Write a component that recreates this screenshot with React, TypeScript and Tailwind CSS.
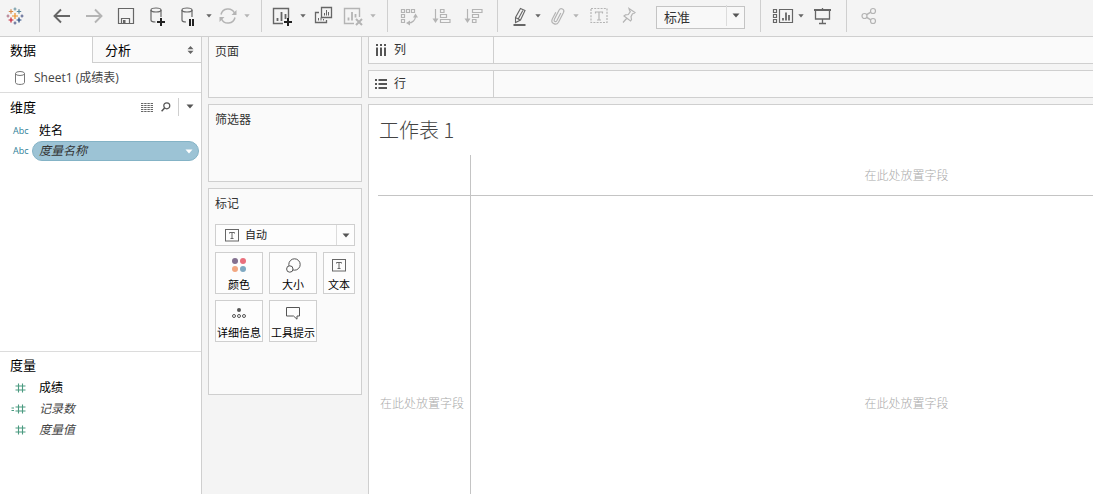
import type { ReactNode } from "react";

const sans = "font-['Open_Sans','Noto_Sans_CJK_SC',sans-serif]";
const light = "font-['Noto_Sans_CJK_SC_Light','Noto_Sans_CJK_SC',sans-serif] font-light";

function Icon({ children, dim = false }: { children: ReactNode; dim?: boolean }) {
  return (
    <svg
      viewBox="0 0 24 24"
      className={`size-6 shrink-0 ${dim ? "text-[#b4b4b4]" : "text-[#666]"}`}
      fill="none"
      stroke="currentColor"
      strokeWidth="1.2"
      aria-hidden="true"
    >
      {children}
    </svg>
  );
}

function Tool({ label, width, children }: { label: string; width: string; children: ReactNode }) {
  return (
    <button type="button" aria-label={label} className={`flex h-8 shrink-0 items-center justify-center ${width}`}>
      {children}
    </button>
  );
}

function Triangle({ color = "text-[#555]" }: { color?: string }) {
  return (
    <svg viewBox="0 0 8 5" className={`h-[5px] w-2 shrink-0 ${color}`} fill="currentColor" aria-hidden="true">
      <path d="M0.5 0.5h7L4 4.5z" />
    </svg>
  );
}

function Caret({ label, dim = false }: { label: string; dim?: boolean }) {
  return (
    <button type="button" aria-label={label} className="flex h-8 w-[10px] shrink-0 items-center justify-center">
      <svg viewBox="0 0 6 4" className={`h-1 w-[6px] ${dim ? "text-[#b4b4b4]" : "text-[#666]"}`} fill="currentColor">
        <path d="M0.3 0.3h5.4L3 3.6z" />
      </svg>
    </button>
  );
}

function Logo() {
  const marks: [number, number, number, string][] = [
    [12, 12, 3, "#eb912c"],
    [8, 7.5, 2.2, "#d98a4a"],
    [16, 7.5, 2.2, "#59879b"],
    [8, 16, 2.4, "#c72035"],
    [16, 16, 2.4, "#1f447e"],
    [12, 5, 1.5, "#7199a6"],
    [12, 19, 1.5, "#5b6591"],
    [5, 12, 1.5, "#b0778a"],
    [19, 12, 1.5, "#5b6591"],
  ];
  return (
    <Icon>
      {marks.map(([x, y, r, c]) => (
        <path key={`${x}-${y}`} d={`M${x - r} ${y}h${r * 2}M${x} ${y - r}v${r * 2}`} stroke={c} strokeWidth="1.2" />
      ))}
    </Icon>
  );
}

function Toolbar() {
  const group = "flex h-8 shrink-0 items-center border-r border-[#cfcfcf]";
  return (
    <header className="flex h-[37px] shrink-0 items-start overflow-hidden border-b border-[#cfcfcf] bg-[#f4f4f4]">
      <div className={`${group} w-10 pl-[3px]`}>
        <Tool label="Tableau" width="w-6"><Logo /></Tool>
      </div>
      <div className={`${group} w-[222px] pl-[6px]`}>
        <Tool label="后退" width="w-8">
          <Icon><path d="M20 12H5M11 5.5 4.5 12l6.5 6.5" strokeWidth="1.9" /></Icon>
        </Tool>
        <Tool label="前进" width="w-8">
          <Icon dim><path d="M4 12h15M13 5.5l6.5 6.5-6.5 6.5" strokeWidth="1.9" /></Icon>
        </Tool>
        <Tool label="保存" width="w-8">
          <Icon>
            <path d="M4.5 4.5h15v15h-15zM7.5 19v-4.5h8V19" />
            <path d="M9 16h2.5v3H9z" fill="currentColor" stroke="none" />
          </Icon>
        </Tool>
        <Tool label="新建数据源" width="w-8">
          <Icon>
            <ellipse cx="10" cy="6" rx="5" ry="2" />
            <path d="M5 6v10c0 1.2 2 2 4.5 2M15 6v7" />
            <path d="M11 18h8M15 14v8" stroke="#222" strokeWidth="2" />
          </Icon>
        </Tool>
        <Tool label="暂停自动更新" width="w-[30px]">
          <Icon>
            <ellipse cx="10" cy="6" rx="5" ry="2" />
            <path d="M5 6v10c0 1.2 1.6 2 4 2M15 6v7" />
            <path d="M13 15v7M16 15v7" stroke="#222" strokeWidth="2" />
          </Icon>
        </Tool>
        <Caret label="自动更新选项" />
        <Tool label="运行更新" width="w-[28px]">
          <Icon dim>
            <path d="M5 10.5A7.2 7.2 0 0 1 18.5 9M19 13.5A7.2 7.2 0 0 1 5.5 15" strokeWidth="1.5" />
            <path d="M20.5 6v5h-5zM3.5 18v-5h5z" fill="currentColor" stroke="none" />
          </Icon>
        </Tool>
        <Caret label="运行选项" dim />
      </div>
      <div className={`${group} w-[126px] pl-[6px]`}>
        <Tool label="新建工作表" width="w-[30px]">
          <Icon>
            <path d="M12 19.5H2.5v-15h15V14" strokeWidth="1.4" />
            <path d="M6.5 17v-3M10.5 17V8M14.5 15V10" strokeWidth="1.8" />
            <path d="M13 18h8M17 14v8" stroke="#222" strokeWidth="2" />
          </Icon>
        </Tool>
        <Caret label="新建选项" />
        <Tool label="复制工作表" width="w-[30px]">
          <Icon>
            <path d="M10.5 3.5h10v10h-10zM8 8.5H4.5v10h11V16" strokeWidth="1.3" />
            <path d="M13.5 11.5V9M15.5 11.5V6M17.5 11.5V8M7.5 16.5V14M10 16.5V13.5M12.5 16.5V15" strokeWidth="1" />
          </Icon>
        </Tool>
        <Tool label="清除工作表" width="w-[30px]">
          <Icon dim>
            <path d="M13 19.5H3.5v-15h15V13" strokeWidth="1.4" />
            <path d="M7.5 16.5v-3M11 16.5V8M14.5 13.5V10" strokeWidth="1.8" />
            <path d="M15 15l6 6M21 15l-6 6" strokeWidth="2" />
          </Icon>
        </Tool>
        <Caret label="清除选项" dim />
      </div>
      <div className={`${group} w-[110px] pl-[5px]`}>
        <Tool label="交换行和列" width="w-8">
          <Icon dim>
            <path d="M4.5 5.5h3v3h-3zM9.5 5.5h3v3h-3zM14.5 5.5h3v3h-3zM4.5 10.5h3v3h-3zM4.5 15.5h3v3h-3zM18.5 12c0 4-3 7-7 7" />
            <path d="M18.5 9.5l2.5 4h-5zM9 19l4-2.5v5z" fill="currentColor" stroke="none" />
          </Icon>
        </Tool>
        <Tool label="升序排序" width="w-8">
          <Icon dim>
            <path d="M6.5 5v11" />
            <path d="M3.5 14.5h6l-3 4.5z" fill="currentColor" stroke="none" />
            <path d="M11.5 5.5h3.5v3h-3.5zM11.5 10.5h6v3h-6zM11.5 15.5h9.5v3h-9.5z" />
          </Icon>
        </Tool>
        <Tool label="降序排序" width="w-8">
          <Icon dim>
            <path d="M6.5 5v11" />
            <path d="M3.5 14.5h6l-3 4.5z" fill="currentColor" stroke="none" />
            <path d="M11.5 5.5H21v3h-9.5zM11.5 10.5h6v3h-6zM11.5 15.5h3.5v3h-3.5z" />
          </Icon>
        </Tool>
      </div>
      <div className={`${group} w-[263px] pl-[7px]`}>
        <Tool label="突出显示" width="w-[28px]">
          <Icon>
            <path d="M13.5 4.5l4.5 2-4.5 9.5-5 2.500V13.5zM8.5 13.5l4.500 2.500M15.800 6.500l-4.300 8" strokeWidth="1.1" />
            <path d="M6.500 21H18.500" strokeWidth="2" />
          </Icon>
        </Tool>
        <Caret label="突出显示选项" />
        <Tool label="组成员" width="w-[28px]">
          <Icon dim>
            <path d="M15.800 9l-4 7.800c-1 1.700-3.400.700-2.500-1.300l4.700-9.300c1.700-2.900 6-1 4.500 2.300l-5 9.700c-2.300 3.700-8 1.200-6.300-3l3.600-7" />
          </Icon>
        </Tool>
        <Caret label="组选项" dim />
        <Tool label="显示标记标签" width="w-9">
          <Icon dim>
            <rect x="4" y="4.5" width="16" height="14" strokeDasharray="2 1.2" />
            <path d="M8.5 9.5V8h7v1.500M12 8v8M10 16h4" />
          </Icon>
        </Tool>
        <Tool label="固定轴" width="w-6">
          <Icon dim>
            <path d="M12 4.5l6 4-1.200 1-1.300.2-1.500 3 .500 2.800-1 1.500-6.500-5 1.500-1.200 2.800-.3 2-2.800-.8-1.500zM10 14l-4 4.500" />
          </Icon>
        </Tool>
        <div className="relative mt-1 ml-[15px] h-[23px] w-[89px] self-start">
          <select
            aria-label="适合"
            className={`h-full w-full appearance-none border border-[#c4c4c4] bg-[#f8f8f8] pl-[7px] text-[13px] leading-5 text-[#333] ${sans}`}
          >
            <option>标准</option>
          </select>
          <span className="pointer-events-none absolute inset-y-[1px] right-[1px] flex w-[18px] items-center justify-center border-l border-[#dcdcdc]">
            <Triangle />
          </span>
        </div>
      </div>
      <div className={`${group} w-[86px] pl-[7px]`}>
        <Tool label="显示隐藏卡" width="w-[28px]">
          <Icon>
            <path d="M3.5 5.5h3v3h-3zM3.5 10.5h3v3h-3zM3.5 15.5h3v3h-3zM9.5 5.5h13v13h-13z" />
            <path d="M13 16.5V14M16 16.5V8.5M19 16.5V11" strokeWidth="1.8" />
          </Icon>
        </Tool>
        <Caret label="显示隐藏卡选项" />
        <Tool label="演示模式" width="w-8">
          <Icon>
            <path d="M4 6h17" strokeWidth="2" />
            <path d="M5.5 6v9h14V6M12.5 15v4.500M12.5 4v2M9 19.5h7" strokeWidth="1.3" />
          </Icon>
        </Tool>
      </div>
      <div className="flex h-8 items-center pl-[6px]">
        <Tool label="共享" width="w-8">
          <Icon dim>
            <circle cx="7.5" cy="12" r="2.5" />
            <circle cx="16" cy="7" r="2.5" />
            <circle cx="16" cy="17" r="2.5" />
            <path d="M9.700 10.700l4.100-2.500M9.700 13.300l4.100 2.500" strokeWidth="1.5" />
          </Icon>
        </Tool>
      </div>
    </header>
  );
}

function HashIcon({ computed = false }: { computed?: boolean }) {
  return (
    <svg viewBox="0 0 16 12" className="h-3 w-4 text-[#4a9a80]" fill="none" stroke="currentColor" strokeWidth="1.1" aria-hidden="true">
      <path d="M4.5 4h10M4.5 8h10M7.5 1.5v9M11.5 1.5v9" />
      {computed && <path d="M0.5 5h2.500M0.5 7.5h2.500" />}
    </svg>
  );
}

function Measure({ name, computed = false, italic = true }: { name: string; computed?: boolean; italic?: boolean }) {
  return (
    <li className="flex h-[21px] items-center">
      <span className="flex w-[27px] justify-end"><HashIcon computed={computed} /></span>
      <span className={`pl-3 ${italic ? "text-[#444] italic" : "text-black"}`}>{name}</span>
    </li>
  );
}

function AbcTag() {
  return (
    <span className="w-8 shrink-0 pl-[13px] font-['Open_Sans',sans-serif] text-[9px] font-medium text-[#2f7f98]">Abc</span>
  );
}

function DataPane() {
  return (
    <aside className="flex w-[202px] shrink-0 flex-col border-r border-[#cfcfcf] bg-white text-[12px] leading-4">
      <div role="tablist" className="flex h-[26px] shrink-0 text-[13px]">
        <button type="button" role="tab" aria-selected="true" className="w-[92px] pl-[10px] text-left text-black">数据</button>
        <button type="button" role="tab" aria-selected="false" className="flex grow items-center justify-between border-b border-l border-[#cfcfcf] bg-[#fafafa] pr-[7px] pl-3 text-black">
          分析
          <svg viewBox="0 0 7 8" className="h-2 w-[7px] text-[#666]" fill="currentColor" aria-hidden="true">
            <path d="M3.5 0 6.5 3.2h-6zM3.5 8l3-3.200h-6z" />
          </svg>
        </button>
      </div>
      <div className="flex h-[30px] shrink-0 items-center border-b border-[#dcdcdc] pl-[14px] text-[#444]">
        <svg viewBox="0 0 12 16" className="h-4 w-3" fill="none" stroke="#777" aria-hidden="true">
          <ellipse cx="6" cy="3.5" rx="4.5" ry="2" />
          <path d="M1.5 3.5v9c0 2.600 9 2.600 9 0v-9" />
        </svg>
        <span className="pl-2">Sheet1 (成绩表)</span>
      </div>
      <section className="flex-[20] border-b border-[#dcdcdc]">
        <div className="flex h-[27px] items-center pl-[10px]">
          <h2 className="grow text-[13px] text-black">维度</h2>
          <button type="button" aria-label="查看数据" className="w-3">
            <svg viewBox="0 0 12 10" className="h-[10px] w-3" stroke="#666" fill="none">
              <path d="M0 1.5h12M0 3.5h12M0 5.5h12M0 7.5h12M0 9.5h12" strokeDasharray="2.4 0.8" />
            </svg>
          </button>
          <button type="button" aria-label="查找字段" className="ml-2 w-[10px]">
            <svg viewBox="0 0 10 10" className="size-[10px]" stroke="#555" fill="none" strokeWidth="1.2">
              <circle cx="5.8" cy="3.8" r="3" />
              <path d="M3.6 6 0.6 9.2" strokeWidth="1.5" />
            </svg>
          </button>
          <span className="ml-[7px] h-[18px] border-l border-[#cfcfcf]" />
          <button type="button" aria-label="维度菜单" className="mr-[7px] ml-[7px]"><Triangle /></button>
        </div>
        <ul>
          <li className="flex h-[21px] items-center">
            <AbcTag />
            <span className="pl-[7px] text-black">姓名</span>
          </li>
          <li className="flex h-5 items-center pr-[2px]">
            <AbcTag />
            <button type="button" className="flex h-5 grow items-center justify-between rounded-full border border-[#84b3c6] bg-[#9cc3d5] pr-[5px] pl-[6px] text-[#333] italic">
              度量名称
              <Triangle color="text-white" />
            </button>
          </li>
        </ul>
      </section>
      <section className="flex-[11]">
        <h2 className="flex h-[25px] items-center pl-[10px] text-[13px] text-black">度量</h2>
        <ul>
          <Measure name="成绩" italic={false} />
          <Measure name="记录数" computed />
          <Measure name="度量值" />
        </ul>
      </section>
    </aside>
  );
}

function TextGlyph() {
  return (
    <svg viewBox="0 0 14 13" className="h-[13px] w-[14px]" fill="none" stroke="#666" aria-hidden="true">
      <rect x="0.5" y="0.5" width="13" height="11.5" />
      <path d="M4.5 4.5v-1h5v1M7 3.5V9.5M5.5 9.5h3" />
    </svg>
  );
}

function MarkButton({ label, children }: { label: string; children: ReactNode }) {
  return (
    <button type="button" className="flex h-[42px] flex-col items-center justify-between border border-[#cfcfcf] bg-[#fdfdfd] pt-1 text-[11px] leading-4 whitespace-nowrap text-black">
      <span className="flex h-4 items-center">{children}</span>
      <span>{label}</span>
    </button>
  );
}

function Cards() {
  const card = "border border-[#cfcfcf] bg-[#fafafa] px-[6px] pt-[7px]";
  return (
    <div className="flex w-[154px] shrink-0 flex-col gap-[6px] text-[12px] leading-4 text-[#333]">
      <section className={`${card} h-[61px] border-t-0`}><h2>页面</h2></section>
      <section className={`${card} h-[78px]`}><h2>筛选器</h2></section>
      <section className={`${card} h-[207px]`}>
        <h2>标记</h2>
        <div className="relative mt-3 h-[22px]">
          <select aria-label="标记类型" className="h-full w-full appearance-none border border-[#cfcfcf] bg-[#fdfdfd] pl-[29px] text-[11px] leading-4 text-[#222]">
            <option>自动</option>
          </select>
          <span className="pointer-events-none absolute inset-y-0 left-[10px] flex items-center"><TextGlyph /></span>
          <span className="pointer-events-none absolute inset-y-[1px] right-[1px] flex w-[18px] items-center justify-center border-l border-[#dcdcdc]">
            <Triangle />
          </span>
        </div>
        <div className="mt-[6px] grid grid-cols-[48px_48px_32px] gap-[6px]">
          <MarkButton label="颜色">
            <svg viewBox="0 0 14 14" className="size-[14px]" aria-hidden="true">
              <circle cx="3" cy="3" r="3" fill="#83708f" />
              <circle cx="11" cy="3" r="3" fill="#ea6f7c" />
              <circle cx="3" cy="11" r="3" fill="#f2a781" />
              <circle cx="11" cy="11" r="3" fill="#7fa9c2" />
            </svg>
          </MarkButton>
          <MarkButton label="大小">
            <svg viewBox="0 0 15 15" className="size-[15px]" fill="none" stroke="#555" aria-hidden="true">
              <circle cx="8.5" cy="6.5" r="5.7" />
              <circle cx="3.8" cy="11" r="3.2" fill="#fdfdfd" />
            </svg>
          </MarkButton>
          <MarkButton label="文本"><TextGlyph /></MarkButton>
          <MarkButton label="详细信息">
            <svg viewBox="0 0 14 10" className="h-[10px] w-[14px]" fill="none" stroke="#555" aria-hidden="true">
              <circle cx="7" cy="2" r="2" fill="#555" stroke="none" />
              <circle cx="2" cy="8" r="1.5" />
              <circle cx="7" cy="8" r="1.5" />
              <circle cx="12" cy="8" r="1.5" />
            </svg>
          </MarkButton>
          <MarkButton label="工具提示">
            <svg viewBox="0 0 14 13" className="h-[13px] w-[14px]" fill="none" stroke="#555" aria-hidden="true">
              <path d="M0.5 0.5h13v8.500h-2.500v3.200L7.5 9h-7z" />
            </svg>
          </MarkButton>
        </div>
      </section>
    </div>
  );
}

function Shelf({ label, first = false, children }: { label: string; first?: boolean; children: ReactNode }) {
  return (
    <section className={`flex shrink-0 border-b border-l border-[#cfcfcf] bg-[#fafafa] ${first ? "h-[27px]" : "h-[28px] border-t"}`}>
      <h2 className="flex w-[125px] items-center gap-[7px] border-r border-[#cfcfcf] pl-[6px] text-[12px] leading-4 text-[#333]">
        <svg viewBox="0 0 12 12" className="size-3" stroke="#555" strokeWidth="2" aria-hidden="true">{children}</svg>
        {label}
      </h2>
    </section>
  );
}

function Worksheet() {
  const hint = `flex items-center justify-center whitespace-nowrap text-[12px] leading-4 text-[#aaa] ${light}`;
  return (
    <main className="flex min-h-0 grow flex-col overflow-hidden border-t border-l border-[#cfcfcf] bg-white pl-[9px]">
      <h1 className={`h-[50px] shrink-0 pl-[1px] text-[20px] leading-[50px] text-[#444] ${light}`}>工作表 1</h1>
      <div className="grid min-h-[454px] shrink-0 grid-cols-[92px_minmax(872px,1fr)] grid-rows-[40px_1fr]">
        <div />
        <div className={`${hint} border-l border-[#c4c4c4]`}>在此处放置字段</div>
        <div className={`${hint} border-t border-[#c4c4c4] pr-1`}>在此处放置字段</div>
        <div className={`${hint} border-t border-l border-[#c4c4c4]`}>在此处放置字段</div>
      </div>
    </main>
  );
}

export default function App() {
  return (
    <div className={`flex h-screen flex-col overflow-hidden bg-[#f4f4f4] ${sans}`}>
      <Toolbar />
      <div className="flex min-h-0 grow gap-[6px]">
        <DataPane />
        <Cards />
        <div className="flex min-w-0 grow flex-col gap-[6px]">
          <Shelf label="列" first>
            <path d="M2 0v2M6 0v2M10 0v2M2 3.5V12M6 3.5V12M10 3.5V12" />
          </Shelf>
          <Shelf label="行">
            <path d="M0 2h2M0 6h2M0 10h2M3.5 2H12M3.5 6H12M3.5 10H12" />
          </Shelf>
          <Worksheet />
        </div>
      </div>
    </div>
  );
}
